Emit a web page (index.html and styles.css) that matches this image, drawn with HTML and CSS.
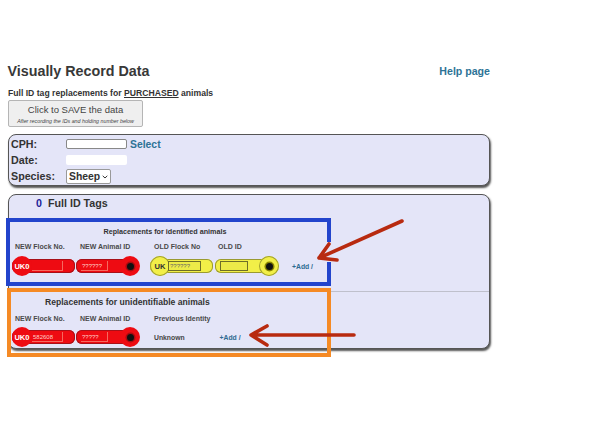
FILE: index.html
```html
<!DOCTYPE html>
<html lang="en">
<head>
<meta charset="utf-8">
<title>Visually Record Data</title>
<link rel="stylesheet" href="styles.css">
</head>
<body>
<main class="page">
  <header class="top">
    <h1>Visually Record Data</h1>
    <a class="help">Help page</a>
  </header>
  <h2 class="sub">Full ID tag replacements for <u>PURCHASED</u> animals</h2>
  <button class="save"><span class="save-main">Click to SAVE the data</span><em>After recording the IDs and holding number below</em></button>

  <section class="panel form">
    <div class="label">CPH:</div>
    <div class="field"><span class="input"></span><a class="select-link">Select</a></div>
    <div class="label">Date:</div>
    <div class="field"><span class="input plain"></span></div>
    <div class="label">Species:</div>
    <div class="field"><span class="dropdown">Sheep <svg width="6" height="4" viewBox="0 0 6 4"><path d="M.7.8 3 3l2.3-2.2" fill="none" stroke="#333" stroke-width="1"/></svg></span></div>
  </section>

  <section class="panel tags">
    <div class="tags-head"><b class="count">0</b><span>Full ID Tags</span></div>

    <div class="group first">
      <div class="group-title">Replacements for identified animals</div>
      <div class="heads">
        <span class="h1">NEW Flock No.</span><span class="h2">NEW Animal ID</span><span class="h3">OLD Flock No</span><span class="h4">OLD ID</span>
      </div>
      <div class="tagrow">
        <div class="tag red left"><i class="knob">UK0</i><span class="slot s31"></span></div>
        <div class="tag red right"><span class="slot s27">??????</span><i class="knob"><s></s></i></div>
        <div class="tag yellow left y1"><i class="knob">UK</i><span class="slot s33">??????</span></div>
        <div class="tag yellow right"><span class="slot s28"></span><i class="knob"><s></s></i></div>
        <a class="add a1">+Add /</a>
      </div>
    </div>

    <div class="group second">
      <div class="group-title big">Replacements for unidentifiable animals</div>
      <div class="heads">
        <span class="h1">NEW Flock No.</span><span class="h2">NEW Animal ID</span><span class="h3">Previous Identity</span>
      </div>
      <div class="tagrow">
        <div class="tag red left"><i class="knob">UK0</i><span class="slot s31">582608</span></div>
        <div class="tag red right"><span class="slot s27">?????</span><i class="knob"><s></s></i></div>
        <span class="unknown">Unknown</span>
        <a class="add a2">+Add /</a>
      </div>
    </div>
  </section>
</main>

<svg class="notes" width="592" height="444" viewBox="0 0 592 444" aria-hidden="true">
  <path class="blue" d="M329 242V220H8V284H329V262"/>
  <rect class="orange" x="9" y="290" width="320" height="65"/>
  <path class="arrow" d="M402 221 319 258M329 244 319 258 337 260"/>
  <path class="arrow" d="M354 335H251M267 326 251 335 267 345"/>
</svg>
</body>
</html>
```

FILE: styles.css
```css
* { box-sizing: border-box; }
html, body { margin: 0; padding: 0; background: #fff; }
body { width: 592px; height: 444px; overflow: hidden; position: relative; font-family: "Liberation Sans", Arial, sans-serif; color: #333; }
.page { width: 490px; padding: 62px 0 0 8px; }
.top { display: flex; justify-content: space-between; align-items: center; height: 18px; }
h1 { margin: 0; font-size: 14.3px; line-height: 18px; font-weight: 700; color: #383838; margin-left: -0.5px; }
.help { font-size: 10.6px; font-weight: 700; color: #2d7396; }
.sub { margin: 8px 0 0; font-size: 8.65px; line-height: 11px; font-weight: 700; color: #333; }
.save { display: flex; flex-direction: column; align-items: center; width: 135px; height: 27px; margin: 1px 0 0; padding: 3px 0 0; border: 1px solid #b5b5b5; border-radius: 2px; background: #efefef; font-family: inherit; color: #444; }
.save-main { font-size: 9.5px; line-height: 12px; }
.save em { font-size: 5.3px; line-height: 9px; margin-top: 1px; white-space: nowrap; }

.panel { background: #e4e5f8; border: 1px solid #555; border-radius: 8px; box-shadow: 1px 2px 2px #555; }
.form { display: grid; grid-template-columns: 55px 1fr; grid-auto-rows: 16px; align-items: center; height: 52px; margin-top: 7px; padding: 1px 0 0 2px; }
.label { font-size: 10.7px; font-weight: 700; color: #333; }
.field { display: flex; align-items: center; gap: 3px; }
.input { display: block; width: 61px; height: 10px; background: #fff; border: 1px solid #888; border-radius: 2px; }
.input.plain { border: 0; }
.select-link { font-size: 10.4px; font-weight: 700; color: #2d7396; }
.dropdown { display: flex; align-items: center; justify-content: space-between; width: 45px; height: 15px; padding: 0 2px; background: #fff; border: 1px solid #999; border-radius: 2px; font-size: 10.4px; font-weight: 700; color: #333; margin-top: 1px; }

.tags { height: 155px; margin-top: 8px; }
.tags-head { display: flex; align-items: center; gap: 6px; height: 16px; padding-left: 27px; font-size: 10.7px; font-weight: 700; color: #333; }
.count { color: #1c2399; }
.group { position: relative; }
.first { height: 74px; margin-top: 7px; padding-top: 9px; border-bottom: 1px solid #bfc0cc; }
.second { padding-top: 5px; }
.group-title { width: 312px; text-align: center; font-size: 7.2px; line-height: 9px; font-weight: 700; }
.group-title.big { width: auto; font-size: 8.6px; line-height: 10px; text-align: left; padding-left: 36px; }
.heads { display: flex; height: 9px; margin-top: 6px; padding-left: 6px; font-size: 7px; line-height: 9px; font-weight: 700; color: #4a4a4a; }
.second .heads { margin-top: 7px; }
.heads span { white-space: nowrap; }
.h1 { width: 65px; }
.h2 { width: 74px; }
.h3 { width: 64px; }
.tagrow { display: flex; align-items: center; height: 20px; margin-top: 5px; padding-left: 3px; font-size: 7px; font-weight: 700; }
.second .tagrow { margin-top: 4px; }

.tag { position: relative; display: flex; align-items: center; height: 14px; border-radius: 6px; }
.tag.left { width: 63px; padding-left: 20px; margin-right: 1px; }
.tag.right { width: 63px; padding-left: 5px; }
.y1 { margin-left: 11px; }
.tag.yellow.right { margin-left: 1px; }
.red { background: #ee0b12; box-shadow: inset 0 0 0 1px #a81018; color: #fff; }
.yellow { background: #f2ef48; box-shadow: inset 0 0 0 1px #9a9a30; color: #333; }
.knob { position: absolute; top: -3px; display: flex; align-items: center; justify-content: center; width: 20px; height: 20px; border-radius: 50%; font-style: normal; font-size: 7.6px; font-weight: 700; text-decoration: none; }
.left .knob { left: 0; }
.right .knob { right: -1px; }
.red .knob { background: #ee0b12; color: #fff; }
.yellow .knob { background: #f2ef48; box-shadow: 0 0 0 1px #a0a030 inset; color: #333; }
.knob s { display: block; width: 7px; height: 7px; border-radius: 50%; background: #111; box-shadow: 0 0 0 1.5px #8a8400; }
.red .knob s { box-shadow: 0 0 0 1.5px #a80c10; }
.slot { position: relative; z-index: 1; display: block; height: 10px; font-size: 6px; font-weight: 400; line-height: 10px; padding-left: 1px; white-space: nowrap; overflow: hidden; }
.red .slot { border: 0 solid #f56a60; border-width: 0 1px 1px 0; color: #ffd0c8; }
.yellow .slot { border: 1px solid #6e6e28; line-height: 8px; color: #666; background: #ecea48; }
.s31 { width: 31px; margin-left: 0; }
.s33 { width: 33px; margin-left: -2px; }
.s27 { width: 27px; }
.s28 { width: 28px; }
.add { color: #2d6a90; font-size: 6.8px; white-space: nowrap; }
.a1 { margin-left: 14px; }
.a2 { margin-left: 35px; }
.unknown { margin-left: 15px; color: #444; font-size: 6.8px; }

.notes { position: absolute; left: 0; top: 0; pointer-events: none; }
.blue { fill: none; stroke: #2244cc; stroke-width: 4; }
.orange { fill: none; stroke: #f58a25; stroke-width: 4; }
.arrow { fill: none; stroke: #b82a10; stroke-width: 3.6; stroke-linecap: round; stroke-linejoin: round; }
```
